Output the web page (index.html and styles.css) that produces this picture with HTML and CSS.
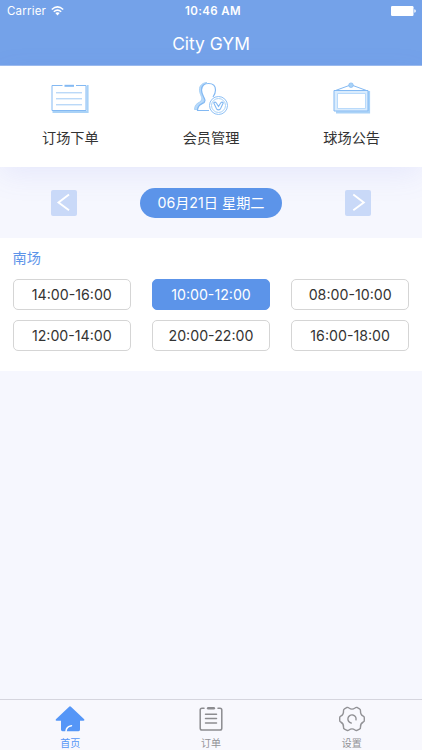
FILE: index.html
```html
<!DOCTYPE html>
<html lang="zh-CN">
	<head>
		<meta charset="utf-8">
		<title>City GYM</title>
		<link rel="stylesheet" href="styles.css">
	</head>
	<body>
		<div class="header">
			<div class="status">
				<div class="carrier">
					<span>Carrier</span>
					<svg class="wifi" width="13" height="10" viewBox="0 0 13 10" fill="none" stroke="#fff" stroke-width="1.5">
						<path d="M.8 3.5Q6.5-1.7 12.2 3.5M2.8 5.8Q6.5 2.4 10.2 5.8"/>
						<path d="M4.3 7.1Q6.5 5.3 8.7 7.1L6.5 9.4Z" fill="#fff" stroke="none"/>
					</svg>
				</div>
				<div class="time">10:46 AM</div>
				<svg class="battery" width="25" height="10" viewBox="0 0 25 10" fill="#fff">
					<rect width="22.5" height="10" rx="1.2"/>
					<path d="M23.3 3.2Q24.8 3.5 24.8 5T23.3 6.8Z"/>
				</svg>
			</div>
			<h1 class="title">City GYM</h1>
		</div>
		<ul class="menu">
			<li>
				<svg width="40" height="34" viewBox="0 0 40 34" fill="none">
					<path d="M36.9 5H37.6V31H3.5V30" stroke="#a9d2f7" stroke-width="2"/>
					<path d="M12.5 4.5H2V29.5H36V4.5H26" stroke="#83b9f3"/>
					<path d="M14.5 4.8H24" stroke="#83b9f3" stroke-width="2"/>
					<path d="M6 11.8H32M6 17.8H32M6 23.8H32" stroke="#9fc9f5"/>
				</svg>
				<span>订场下单</span>
			</li>
			<li>
				<svg width="40" height="34" viewBox="0 0 40 34" fill="none">
					<path d="M16 1.5C10 2 7.5 6 8.8 11C9.5 15 12 16.5 10 20C7.5 22.5 4 22 3.5 28.5H6.5C6.5 23 13 24 13.5 18C9 12 9 5 16 1.5Z" fill="#b9dafb" stroke="#a9d2f7"/>
					<path d="M18 29.5H6.5C6.5 21 14 24 14 19.5C14 17 10.5 14 10.5 9C10.5 4.5 13.5 2.5 17.5 2.5S24.5 4.5 24.5 9C24.5 12 23.5 14 22 16" stroke="#83b9f3" stroke-width="1.2"/>
					<circle cx="27.5" cy="24.5" r="9" stroke="#8fc1f6"/>
					<circle cx="27.5" cy="24.5" r="7" stroke="#a9d2f7"/>
					<path d="M22.7 21.8Q24.2 20.2 25.5 22.2L27.5 25.5L29.5 22.2Q30.8 20.2 32.3 21.8L29.5 27.8Q27.5 29.8 25.5 27.8Z" stroke="#83b9f3" stroke-width="1.1"/>
				</svg>
				<span>会员管理</span>
			</li>
			<li>
				<svg width="40" height="34" viewBox="0 0 40 34" fill="none">
					<path d="M37 10V31.3H4" stroke="#a9d2f7" stroke-width="2.2"/>
					<path d="M2 9.5H36V30H2Z" fill="#daecfd" stroke="#83b9f3"/>
					<path d="M5.5 12.5H33.5V27.5H5.5Z" fill="#fff" stroke="#b9dafb"/>
					<path d="M3.5 9.5L19 3.8L34.5 9.5" stroke="#83b9f3"/>
					<circle cx="19" cy="4.2" r="2.3" fill="#a9d2f7" stroke="#83b9f3" stroke-width=".7"/>
				</svg>
				<span>球场公告</span>
			</li>
		</ul>
		<div class="date">
			<a class="arrow" href="#">
				<svg width="26" height="26" viewBox="0 0 26 26" fill="none" stroke="#fff" stroke-width="1.9"><path d="M18 4.6L7.5 12.5L18 20.3"/></svg>
			</a>
			<div class="day">06月21日 星期二</div>
			<a class="arrow" href="#">
				<svg width="26" height="26" viewBox="0 0 26 26" fill="none" stroke="#fff" stroke-width="1.9"><path d="M8.3 4.6L18.8 12.5L8.3 20.3"/></svg>
			</a>
		</div>
		<div class="court">
			<h2 class="name">南场</h2>
			<ul class="slots">
				<li>14:00-16:00</li>
				<li class="active">10:00-12:00</li>
				<li>08:00-10:00</li>
				<li>12:00-14:00</li>
				<li>20:00-22:00</li>
				<li>16:00-18:00</li>
			</ul>
		</div>
		<ul class="tabbar">
			<li class="active">
				<svg width="30" height="28" viewBox="0 0 30 28">
					<path d="M15 1.2Q15.5 1.2 16.2 1.9L29.2 14.2Q30 15.5 28.5 15.7H25V24.5Q25 26.3 23.5 26.3H7.5Q6 26.3 6 24.5V15.7H1.5Q0 15.5.9 14.2L13.9 1.9Q14.5 1.2 15 1.2Z" fill="#5596f7"/>
					<path d="M11 26.3Q11.3 21.5 16.5 20.7" fill="none" stroke="#fff" stroke-width="1.5" stroke-linecap="round"/>
				</svg>
				<span>首页</span>
			</li>
			<li>
				<svg width="30" height="28" viewBox="0 0 30 28" fill="none" stroke="#8c8c90" stroke-width="1.5" stroke-linecap="round">
					<path d="M8 3.2H6Q4.2 3.2 4.2 5V23.2Q4.2 25 6 25H24Q25.8 25 25.8 23.2V5Q25.8 3.2 24 3.2H22"/>
					<path d="M12.2 3.2H17.8" stroke-width="2.6"/>
					<path d="M9.5 9.2H20.5M9.5 13.5H20.5M9.5 18H20.5"/>
				</svg>
				<span>订单</span>
			</li>
			<li>
				<svg width="30" height="28" viewBox="0 0 30 28" fill="none" stroke="#929296" stroke-width="1.4" stroke-linecap="round">
					<path d="M10 2.5Q11 2.2 12 3Q15 5.2 18 3Q19 2.2 20 2.5L22.5 3.9Q23.7 4.6 23.5 6Q23.3 9.8 26.3 11.2Q27.4 11.8 27.3 12.8V15.2Q27.4 16.4 26.3 17Q23.3 18.4 23.5 22Q23.7 23.4 22.5 24.1L20 25.4Q19 25.8 18 25Q15 22.8 12 25Q11 25.8 10 25.4L7.5 24.1Q6.3 23.4 6.5 22Q6.7 18.4 3.7 17Q2.6 16.4 2.7 15.2V12.8Q2.6 11.8 3.7 11.2Q6.7 9.8 6.5 6Q6.3 4.6 7.5 3.9Z"/>
					<path d="M14.2 18A4.1 4.1 0 1 1 19 14.8"/>
				</svg>
				<span>设置</span>
			</li>
		</ul>
	</body>
</html>
```
FILE: styles.css
```css
*{
	margin: 0;
	padding: 0;
	box-sizing: border-box;
}
ul{
	list-style: none;
}
a{
	text-decoration: none;
}
body{
	display: flex;
	flex-direction: column;
	height: 100vh;
	overflow: hidden;
	background-color: #f6f7fe;
	font-family: Inter, "Noto Sans CJK SC", sans-serif;
	color: #333;
}
svg{
	display: block;
	flex: none;
}
.header{
	height: 66px;
	background-color: #74a2e9;
	border-bottom: 1px solid #9dbcee;
	color: #fff;
}
.status{
	display: grid;
	grid-template-columns: 1fr auto 1fr;
	align-items: center;
	height: 22px;
	padding: 0 6px 0 7px;
	font-size: 11.5px;
}
.carrier{
	display: flex;
	align-items: center;
	gap: 5px;
	letter-spacing: .2px;
}
.time{
	padding-left: 3px;
	font-weight: 600;
	letter-spacing: .35px;
}
.battery{
	justify-self: end;
}
.title{
	height: 43px;
	line-height: 43px;
	text-align: center;
	font-size: 17.4px;
	font-weight: 400;
}
.menu{
	display: flex;
	height: 101px;
	background-color: #fff;
	box-shadow: 0 8px 28px rgba(100,110,240,.1);
}
.menu li{
	flex: 1;
	display: flex;
	flex-direction: column;
	align-items: center;
	padding-top: 15px;
}
.menu span{
	margin-top: 12px;
	line-height: 22px;
	font-size: 14.2px;
}
.date{
	display: flex;
	justify-content: space-between;
	align-items: center;
	height: 71px;
	padding: 0 51px;
}
.arrow{
	width: 26px;
	height: 26px;
	border-radius: 2px;
	background-color: #c9d9f8;
}
.day{
	width: 142px;
	height: 30px;
	border-radius: 15px;
	line-height: 30px;
	text-align: center;
	font-size: 14.2px;
	background-color: #5c94e9;
	color: #fff;
}
.court{
	height: 133px;
	padding: 9px 12.5px 0;
	background-color: #fff;
}
.name{
	line-height: 22px;
	font-size: 14.2px;
	font-weight: 400;
	color: #5c94e9;
}
.slots{
	display: grid;
	grid-template-columns: repeat(3, 1fr);
	gap: 10px 20.5px;
	margin-top: 10px;
}
.slots li{
	height: 31px;
	border: 1px solid #d5d5d5;
	border-radius: 5px;
	line-height: 30px;
	text-align: center;
	font-size: 14.2px;
}
.slots .active{
	border-color: #5c94e9;
	background-color: #5c94e9;
	color: #fff;
}
.tabbar{
	display: flex;
	height: 51px;
	margin-top: auto;
	border-top: 1px solid #d5d5de;
	background-color: #f8f8fd;
}
.tabbar li{
	flex: 1;
	display: flex;
	flex-direction: column;
	align-items: center;
	padding-top: 5px;
	color: #929296;
}
.tabbar span{
	margin-top: 3px;
	line-height: 15px;
	font-size: 10px;
}
.tabbar .active{
	color: #5596f7;
}
```
